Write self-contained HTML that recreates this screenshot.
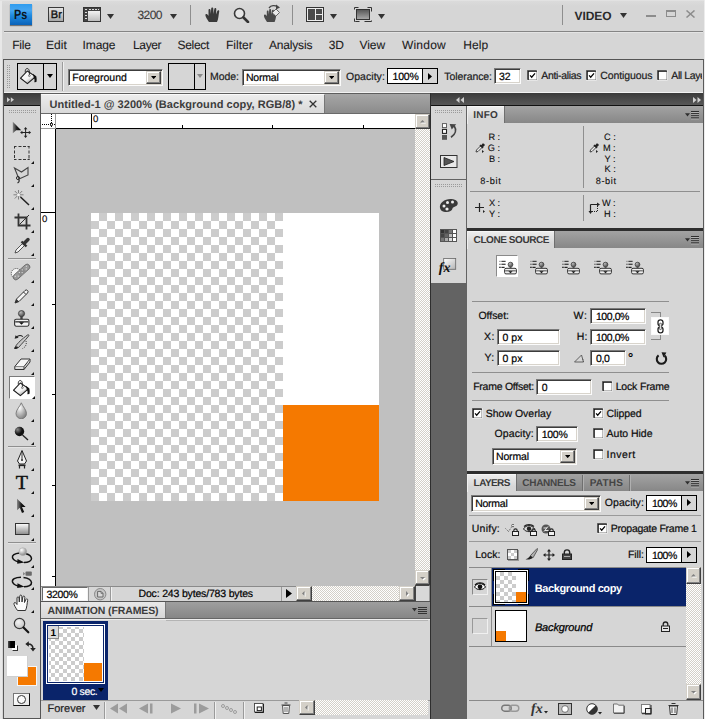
<!DOCTYPE html>
<html lang="en"><head><meta charset="utf-8"><title>Adobe Photoshop CS4</title>
<style>
html,body{margin:0;padding:0;}
body{width:705px;height:719px;overflow:hidden;background:#d6d6d6;position:relative;font-family:"Liberation Sans",sans-serif;}
#app{position:absolute;left:0;top:0;width:705px;height:719px;overflow:hidden;}
#app div,#app svg,#app span{position:absolute;box-sizing:border-box;}
.t{white-space:pre;line-height:normal;text-rendering:geometricPrecision;-webkit-text-stroke:0.2px currentColor;}

.sunk{background:#fff;border:1px solid;border-color:#7a7a7a #fbfbfb #fbfbfb #7a7a7a;box-shadow:inset 1px 1px 0 #3c3c3c,inset -1px -1px 0 #d8d4cc;}
.blk{border:1px solid #000;}
.btn{background:#d4d0c8;border:1px solid;border-color:#d4d0c8 #404040 #404040 #d4d0c8;box-shadow:inset -1px -1px 0 #808080,inset 1px 1px 0 #fff;}
.dith{background-color:#d4d0c8;background-image:linear-gradient(45deg,#fff 25%,transparent 25%,transparent 75%,#fff 75%),linear-gradient(45deg,#fff 25%,transparent 25%,transparent 75%,#fff 75%);background-size:2px 2px;background-position:0 0,1px 1px;}
.chk{background-color:#fff;background-image:linear-gradient(45deg,#ccc 25%,transparent 25%,transparent 75%,#ccc 75%),linear-gradient(45deg,#ccc 25%,transparent 25%,transparent 75%,#ccc 75%);background-size:16px 16px;background-position:0 0,8px 8px;}
.chks{background-color:#fff;background-image:linear-gradient(45deg,#ccc 25%,transparent 25%,transparent 75%,#ccc 75%),linear-gradient(45deg,#ccc 25%,transparent 25%,transparent 75%,#ccc 75%);background-size:8px 8px;background-position:0 0,4px 4px;}
.cb{background:#fff;border:1px solid;border-color:#555 #eee #eee #555;box-shadow:inset 1px 1px 0 #222;}
</style></head>
<body><div id="app">
<div style="left:0px;top:0px;width:705px;height:719px;background:#d6d6d6;"></div>
<div style="left:0px;top:0px;width:705px;height:31px;background:linear-gradient(#dcdcdc,#d6d6d6 6px);"></div>
<div style="left:4px;top:31px;width:699px;height:1px;background:#858585;"></div>
<div style="left:3px;top:59px;width:701px;height:1px;background:#555;"></div>
<div style="left:0px;top:0px;width:1.5px;height:719px;background:#e8e8e8;"></div>
<div style="left:0px;top:0px;width:705px;height:1px;background:#e2e2e2;"></div>
<div style="left:704px;top:0px;width:1px;height:719px;background:#ececec;"></div>
<div style="left:3px;top:59px;width:1px;height:660px;background:#5a5a5a;"></div>
<div style="left:703px;top:59px;width:1px;height:660px;background:#5a5a5a;"></div>
<div style="left:4px;top:32px;width:699px;height:1px;background:#e4e4e4;"></div>
<div style="left:4px;top:92px;width:699px;height:1px;background:#f2f2f2;"></div>
<div style="left:10px;top:4px;width:22px;height:21px;background:linear-gradient(#2f9cee,#46a6f2 30%,#1f8ae0 55%,#0a62b8);box-shadow:0 1px 1px rgba(0,0,0,.45);"></div>
<div style="left:48px;top:7px;width:16px;height:15px;background:linear-gradient(#e4e4e4,#a8a8a8);border:1px solid #3a3a3a;"></div>
<svg style="left:83px;top:7px;" width="18" height="15" viewBox="0 0 18 15"><rect x="0.5" y="0.5" width="17" height="14" fill="#d9d9d9" stroke="#333"/><rect x="1" y="1" width="16" height="3" fill="#444"/><rect x="1" y="1" width="4" height="13" fill="#444"/><rect x="5" y="4" width="12" height="10" fill="url(#gfilm)"/><defs><linearGradient id="gfilm" x1="0" y1="0" x2="0" y2="1"><stop offset="0" stop-color="#f2f2f2"/><stop offset="1" stop-color="#bdbdbd"/></linearGradient></defs><g fill="#ddd"><rect x="2" y="2" width="2" height="1"/><rect x="2" y="5" width="2" height="1"/><rect x="2" y="8" width="2" height="1"/><rect x="2" y="11" width="2" height="1"/><rect x="6" y="2" width="2" height="1"/><rect x="9" y="2" width="2" height="1"/><rect x="12" y="2" width="2" height="1"/><rect x="15" y="2" width="1" height="1"/></g></svg>
<svg style="left:107px;top:13.5px;" width="7" height="5" viewBox="0 0 7 5"><polygon points="0,0 7,0 3.5,5" fill="#333"/></svg>
<svg style="left:170px;top:13.5px;" width="7" height="5" viewBox="0 0 7 5"><polygon points="0,0 7,0 3.5,5" fill="#333"/></svg>
<div style="left:190px;top:5px;width:1px;height:20px;background:#8e8e8e;"></div>
<div style="left:292px;top:5px;width:1px;height:20px;background:#8e8e8e;"></div>
<div style="left:562px;top:5px;width:1px;height:20px;background:#8e8e8e;"></div>
<svg style="left:205px;top:7px;" width="17" height="15" viewBox="0 0 17 15"><path d="M4 15 C2 12 0 9 0.5 7.5 C1 6.5 2.5 7 3.5 9 L3.5 3 C3.5 1.5 5.5 1.5 5.5 3 L5.8 7 L6.2 1.5 C6.2 0 8.3 0 8.3 1.5 L8.5 7 L9.3 2 C9.5 0.6 11.4 0.8 11.3 2.3 L11 7.5 L12.3 4 C12.8 2.8 14.5 3.3 14.2 4.7 C13.5 8 13.5 12 12 15 Z" fill="#3a3a3a"/></svg>
<svg style="left:233px;top:7px;" width="17" height="16" viewBox="0 0 17 16"><circle cx="6.5" cy="6.5" r="5" fill="#e6e6e6" stroke="#3a3a3a" stroke-width="1.6"/><path d="M10.5 10.5 L15 15" stroke="#333" stroke-width="2.6" stroke-linecap="round"/></svg>
<svg style="left:263px;top:4px;" width="18" height="19" viewBox="0 0 18 19"><path d="M4 18 C2 15 0.5 12.5 1 11 C1.5 10 3 10.5 3.8 12 L3.8 7.5 C3.8 6 5.6 6 5.6 7.5 L5.8 10.5 L6.2 6 C6.2 4.7 8.1 4.7 8.1 6 L8.3 10.5 L9 6.6 C9.2 5.3 11 5.5 10.9 6.9 L10.7 11 L11.8 8.5 C12.3 7.4 13.8 7.9 13.5 9.1 C13 12 13 15 11.6 18 Z" fill="#4a4a4a"/><path d="M9.5 8.5 L13 5 L16.5 8.5 L13 12" fill="#e9e9e9" stroke="#666" stroke-width="1"/><path d="M6 4 C8 1.2 12 1 14.5 3" fill="none" stroke="#444" stroke-width="1.3"/><polygon points="13,0.5 17,3.5 13,5.5" fill="#444"/></svg>
<svg style="left:306px;top:7px;" width="18" height="15" viewBox="0 0 18 15"><rect x="0.5" y="0.5" width="17" height="14" fill="#ededed" stroke="#333"/><rect x="2" y="2" width="7" height="11" fill="#4a4a4a"/><rect x="10" y="2" width="6" height="5" fill="#4a4a4a"/><rect x="10" y="8" width="6" height="5" fill="#4a4a4a"/></svg>
<svg style="left:330px;top:13.5px;" width="7" height="5" viewBox="0 0 7 5"><polygon points="0,0 7,0 3.5,5" fill="#333"/></svg>
<svg style="left:354px;top:7px;" width="18" height="15" viewBox="0 0 18 15"><rect x="0.5" y="0.5" width="17" height="14" fill="none" stroke="#333" stroke-dasharray="4 9 8 9 8 5 4 0" /><rect x="2.5" y="2.5" width="13" height="10" fill="url(#gscr)" stroke="#333"/><defs><linearGradient id="gscr" x1="0" y1="0" x2="0" y2="1"><stop offset="0" stop-color="#555"/><stop offset="1" stop-color="#aaa"/></linearGradient></defs></svg>
<svg style="left:378px;top:13.5px;" width="7" height="5" viewBox="0 0 7 5"><polygon points="0,0 7,0 3.5,5" fill="#333"/></svg>
<svg style="left:620px;top:13px;" width="7" height="5" viewBox="0 0 7 5"><polygon points="0,0 7,0 3.5,5" fill="#333"/></svg>
<div style="left:646px;top:15px;width:10px;height:2px;background:#8c8c8c;"></div>
<div style="left:666px;top:10px;width:10px;height:7px;border:1px solid #8c8c8c;border-top-width:2px;"></div>
<svg style="left:686px;top:10px;" width="9" height="8" viewBox="0 0 9 8"><path d="M0.5 0.5 L8.5 7.5 M8.5 0.5 L0.5 7.5" stroke="#8c8c8c" stroke-width="1.5"/></svg>
<svg style="left:7px;top:65px;" width="5" height="24" viewBox="0 0 5 24"><g fill="#9a9a9a"><rect x="0" y="0" width="1" height="1"/><rect x="2" y="0" width="1" height="1"/><rect x="0" y="2" width="1" height="1"/><rect x="2" y="2" width="1" height="1"/><rect x="0" y="4" width="1" height="1"/><rect x="2" y="4" width="1" height="1"/><rect x="0" y="6" width="1" height="1"/><rect x="2" y="6" width="1" height="1"/><rect x="0" y="8" width="1" height="1"/><rect x="2" y="8" width="1" height="1"/><rect x="0" y="10" width="1" height="1"/><rect x="2" y="10" width="1" height="1"/><rect x="0" y="12" width="1" height="1"/><rect x="2" y="12" width="1" height="1"/><rect x="0" y="14" width="1" height="1"/><rect x="2" y="14" width="1" height="1"/><rect x="0" y="16" width="1" height="1"/><rect x="2" y="16" width="1" height="1"/><rect x="0" y="18" width="1" height="1"/><rect x="2" y="18" width="1" height="1"/><rect x="0" y="20" width="1" height="1"/><rect x="2" y="20" width="1" height="1"/><rect x="0" y="22" width="1" height="1"/><rect x="2" y="22" width="1" height="1"/></g></svg>
<div style="left:17px;top:63px;width:40px;height:27px;border:1px solid #000;"></div>
<div style="left:43px;top:63px;width:1px;height:27px;background:#000;"></div>
<svg style="left:47px;top:74px;" width="6" height="4" viewBox="0 0 6 4"><polygon points="0,0 6,0 3.0,4" fill="#000"/></svg>
<div style="left:62px;top:62px;width:1px;height:29px;background:#9c9c9c;"></div>
<div style="left:63px;top:62px;width:1px;height:29px;background:#f0f0f0;"></div>
<div class="sunk" style="left:68px;top:69px;width:95px;height:17px;"></div>
<div class="btn" style="left:146px;top:71px;width:15px;height:13px;"></div>
<svg style="left:151px;top:76.2px;" width="5.4" height="3.2" viewBox="0 0 5.4 3.2"><polygon points="0,0 5.4,0 2.7,3.2" fill="#000"/></svg>
<div style="left:168px;top:63px;width:38px;height:27px;border:1px solid #000;"></div>
<div style="left:194px;top:63px;width:1px;height:27px;background:#000;"></div>
<svg style="left:197px;top:74px;" width="6" height="4" viewBox="0 0 6 4"><polygon points="0,0 6,0 3.0,4" fill="#8a8a8a"/></svg>
<div class="sunk" style="left:242px;top:69px;width:99px;height:17px;"></div>
<div class="btn" style="left:324px;top:71px;width:15px;height:13px;"></div>
<svg style="left:329px;top:76.2px;" width="5.4" height="3.2" viewBox="0 0 5.4 3.2"><polygon points="0,0 5.4,0 2.7,3.2" fill="#000"/></svg>
<div style="left:387px;top:68px;width:51px;height:16px;background:#fff;border:1px solid #000;"></div>
<div style="left:422px;top:68px;width:16px;height:16px;background:#d6d6d6;border:1px solid #000;"></div>
<svg style="left:428px;top:73px;" width="4" height="7" viewBox="0 0 4 7"><polygon points="0,0 4,3.5 0,7" fill="#000"/></svg>
<div class="sunk" style="left:494px;top:68px;width:27px;height:16px;"></div>
<svg style="left:527.2px;top:70.2px;" width="11" height="11" viewBox="0 0 11 11"><rect x="0" y="0" width="10.6" height="10.6" fill="#f0f0f0"/><rect x="0" y="0" width="9.7" height="9.7" fill="#777"/><rect x="0.7" y="0.7" width="9.2" height="9.2" fill="#151515"/><rect x="1.8" y="1.8" width="7.9" height="7.9" fill="#fff"/><path d="M3.1 5.3 L4.7 7.2 L8 3.3" fill="none" stroke="#000" stroke-width="1.25"/></svg>
<svg style="left:586px;top:70.2px;" width="11" height="11" viewBox="0 0 11 11"><rect x="0" y="0" width="10.6" height="10.6" fill="#f0f0f0"/><rect x="0" y="0" width="9.7" height="9.7" fill="#777"/><rect x="0.7" y="0.7" width="9.2" height="9.2" fill="#151515"/><rect x="1.8" y="1.8" width="7.9" height="7.9" fill="#fff"/><path d="M3.1 5.3 L4.7 7.2 L8 3.3" fill="none" stroke="#000" stroke-width="1.25"/></svg>
<svg style="left:656.8px;top:70.2px;" width="11" height="11" viewBox="0 0 11 11"><rect x="0" y="0" width="10.6" height="10.6" fill="#f0f0f0"/><rect x="0" y="0" width="9.7" height="9.7" fill="#777"/><rect x="0.7" y="0.7" width="9.2" height="9.2" fill="#151515"/><rect x="1.8" y="1.8" width="7.9" height="7.9" fill="#fff"/></svg>
<div style="left:4px;top:93px;width:37px;height:13px;background:linear-gradient(#3a3a3a,#444 30%,#565656 90%,#111 91%);"></div>
<svg style="left:7px;top:97px;" width="8" height="6" viewBox="0 0 8 6"><polygon points="0,0.3 3.2,2.8 0,5.3" fill="#d0d0d0"/><polygon points="3.8,0.3 7,2.8 3.8,5.3" fill="#d0d0d0"/></svg>
<div style="left:430px;top:93px;width:273px;height:13px;background:linear-gradient(#3a3a3a,#444 30%,#565656 90%,#111 91%);"></div>
<svg style="left:456px;top:97px;" width="8" height="6" viewBox="0 0 8 6"><polygon points="3.5,0 0,3 3.5,6" fill="#d0d0d0"/><polygon points="8,0 4.5,3 8,6" fill="#d0d0d0"/></svg>
<svg style="left:692.7px;top:96.8px;" width="8" height="6" viewBox="0 0 8 6"><polygon points="0,0 3.5,3 0,6" fill="#d0d0d0"/><polygon points="4.5,0 8,3 4.5,6" fill="#d0d0d0"/></svg>
<div style="left:4px;top:106px;width:36px;height:613px;background:#d6d6d6;"></div>
<div style="left:40px;top:94px;width:1px;height:625px;background:#555;"></div>
<svg style="left:9px;top:110px;" width="28" height="3" viewBox="0 0 28 3"><g fill="#9a9a9a"><rect x="0" y="0" width="1" height="1"/><rect x="2" y="0" width="1" height="1"/><rect x="4" y="0" width="1" height="1"/><rect x="6" y="0" width="1" height="1"/><rect x="8" y="0" width="1" height="1"/><rect x="10" y="0" width="1" height="1"/><rect x="12" y="0" width="1" height="1"/><rect x="14" y="0" width="1" height="1"/><rect x="16" y="0" width="1" height="1"/><rect x="18" y="0" width="1" height="1"/><rect x="20" y="0" width="1" height="1"/><rect x="22" y="0" width="1" height="1"/><rect x="24" y="0" width="1" height="1"/><rect x="26" y="0" width="1" height="1"/><rect x="0" y="2" width="1" height="1"/><rect x="2" y="2" width="1" height="1"/><rect x="4" y="2" width="1" height="1"/><rect x="6" y="2" width="1" height="1"/><rect x="8" y="2" width="1" height="1"/><rect x="10" y="2" width="1" height="1"/><rect x="12" y="2" width="1" height="1"/><rect x="14" y="2" width="1" height="1"/><rect x="16" y="2" width="1" height="1"/><rect x="18" y="2" width="1" height="1"/><rect x="20" y="2" width="1" height="1"/><rect x="22" y="2" width="1" height="1"/><rect x="24" y="2" width="1" height="1"/><rect x="26" y="2" width="1" height="1"/></g></svg>
<div style="left:41px;top:93px;width:389px;height:1px;background:#5e5e5e;"></div>
<div style="left:41px;top:94px;width:389px;height:20px;background:linear-gradient(#a6a6a6,#8a8a8a);"></div>
<div style="left:41px;top:94px;width:284px;height:20px;background:linear-gradient(#ececec,#d8d8d8);border-right:1px solid #777;border-top:1px solid #fafafa;"></div>
<svg style="left:309px;top:100px;" width="8" height="8" viewBox="0 0 8 8"><path d="M0.7 0.7 L7.3 7.3 M7.3 0.7 L0.7 7.3" stroke="#333" stroke-width="1.3"/></svg>
<div style="left:41px;top:113px;width:389px;height:1px;background:#6a6a6a;"></div>
<div style="left:41px;top:114px;width:374px;height:15px;background:#fff;"></div>
<div style="left:41px;top:114px;width:15px;height:473px;background:#fff;"></div>
<div style="left:41px;top:128px;width:374px;height:1px;background:#000;"></div>
<div style="left:55px;top:114px;width:1px;height:473px;background:#000;"></div>
<div style="left:91px;top:114px;width:1px;height:14px;background:#000;"></div>
<div style="left:41px;top:212px;width:14px;height:1px;background:#000;"></div>
<div style="left:182px;top:125px;width:1px;height:3px;background:#000;"></div>
<div style="left:272px;top:125px;width:1px;height:3px;background:#000;"></div>
<div style="left:363px;top:125px;width:1px;height:3px;background:#000;"></div>
<div style="left:52px;top:304px;width:3px;height:1px;background:#000;"></div>
<div style="left:52px;top:394px;width:3px;height:1px;background:#000;"></div>
<div style="left:52px;top:485px;width:3px;height:1px;background:#000;"></div>
<div style="left:52px;top:576px;width:3px;height:1px;background:#000;"></div>
<div style="left:41px;top:128px;width:15px;height:1px;background:#9a9a9a;"></div>
<div style="left:55px;top:114px;width:1px;height:14px;background:#9a9a9a;"></div>
<svg style="left:41px;top:114px;" width="14" height="14" viewBox="0 0 14 14"><path d="M1 10.5 H14 M10.5 0 V14" stroke="#000" stroke-width="1" stroke-dasharray="1 1"/><rect x="9.5" y="9.5" width="2" height="2" fill="#fff" stroke="#000" stroke-width="0.7"/></svg>
<div style="left:56px;top:129px;width:359px;height:458px;background:#c0c0c0;"></div>
<div class="chk" style="left:91px;top:213px;width:192px;height:288px;"></div>
<div style="left:283px;top:213px;width:96px;height:192px;background:#fff;"></div>
<div style="left:283px;top:405px;width:96px;height:96px;background:#f57900;"></div>
<div class="dith" style="left:415px;top:114px;width:15px;height:473px;"></div>
<div class="btn" style="left:415px;top:114px;width:15px;height:15px;"></div>
<svg style="left:420px;top:119px;" width="7" height="6" viewBox="0 0 7 6"><polygon points="1,4.5 6,4.5 3.5,2" fill="#fff"/><polygon points="0,3.5 5,3.5 2.5,1" fill="#808080"/></svg>
<div class="btn" style="left:415px;top:570px;width:15px;height:15px;"></div>
<svg style="left:420px;top:576px;" width="7" height="6" viewBox="0 0 7 6"><polygon points="1,2 6,2 3.5,4.5" fill="#fff"/><polygon points="0,1 5,1 2.5,3.5" fill="#808080"/></svg>
<div style="left:41px;top:586px;width:389px;height:16px;background:#d6d6d6;"></div>
<div style="left:41px;top:586px;width:374px;height:1px;background:#8a8a8a;"></div>
<div style="left:42px;top:587px;width:46px;height:14px;background:#fff;border:1px solid;border-color:#6a6a6a #f4f4f4 #f4f4f4 #6a6a6a;"></div>
<div style="left:88px;top:587px;width:1px;height:14px;background:#999;"></div>
<svg style="left:94px;top:588px;" width="13" height="13" viewBox="0 0 13 13"><circle cx="6.2" cy="6.2" r="5.7" fill="#c6c6c6" stroke="#8a8a8a" stroke-width="1"/><path d="M3.6 3.4 H7 L9 5.4 V9 H3.6 Z" fill="#d8d8d8" stroke="#6a6a6a" stroke-width="1"/><path d="M7 3.4 V5.4 H9" fill="none" stroke="#6a6a6a" stroke-width="0.8"/></svg>
<div style="left:110px;top:587px;width:1px;height:14px;background:#999;"></div>
<div style="left:111px;top:587px;width:1px;height:14px;background:#f2f2f2;"></div>
<div style="left:281px;top:587px;width:1px;height:14px;background:#999;"></div>
<svg style="left:286px;top:589px;" width="6" height="9" viewBox="0 0 6 9"><polygon points="0,0 6,4.5 0,9" fill="#000"/></svg>
<div class="dith" style="left:296px;top:586px;width:119px;height:15px;"></div>
<div class="btn" style="left:296px;top:586px;width:16px;height:15px;"></div>
<svg style="left:301px;top:591px;" width="6" height="7" viewBox="0 0 6 7"><polygon points="4.5,1 4.5,6 2,3.5" fill="#fff"/><polygon points="3.5,0 3.5,5 1,2.5" fill="#808080"/></svg>
<div class="btn" style="left:399px;top:586px;width:16px;height:15px;"></div>
<svg style="left:405px;top:591px;" width="6" height="7" viewBox="0 0 6 7"><polygon points="2,1 2,6 4.5,3.5" fill="#fff"/><polygon points="1,0 1,5 3.5,2.5" fill="#808080"/></svg>
<div style="left:415px;top:585px;width:15px;height:16px;background:#d8d8d8;border-right:1px solid #9a9a9a;border-top:1px solid #444;border-left:1px solid #444;"></div>
<div style="left:41px;top:601px;width:389px;height:1px;background:#555;"></div>
<div style="left:41px;top:602px;width:389px;height:17px;background:linear-gradient(#9e9e9e,#858585);"></div>
<div style="left:41px;top:602px;width:125px;height:17px;background:linear-gradient(#e8e8e8,#d6d6d6);border-right:1px solid #777;"></div>
<svg style="left:412px;top:607px;" width="15" height="7" viewBox="0 0 15 7"><polygon points="0,1 5,1 2.5,4.5" fill="#333"/><g fill="#333"><rect x="6" y="0" width="9" height="1"/><rect x="6" y="2" width="9" height="1"/><rect x="6" y="4" width="9" height="1"/><rect x="6" y="6" width="9" height="1"/></g></svg>
<div style="left:41px;top:618px;width:389px;height:1px;background:#666;"></div>
<div style="left:41px;top:619px;width:389px;height:1px;background:#eee;"></div>
<div style="left:166px;top:620px;width:262px;height:1px;background:#b4b4b4;"></div>
<div style="left:43px;top:621px;width:65px;height:79px;background:#0a246a;"></div>
<div style="left:46px;top:624px;width:59px;height:60px;background:#fff;"></div>
<div style="left:47px;top:625px;width:57px;height:58px;background:#0a246a;"></div>
<div style="left:48px;top:626px;width:55px;height:56px;background:#fff;"></div>
<div style="left:48.5px;top:626.5px;width:35.5px;height:54.5px;overflow:hidden;"><div class="chks" style="left:-1.5px;top:-1.75px;width:48px;height:64px;"></div></div>
<div style="left:84px;top:626.5px;width:18.5px;height:37px;background:#fff;"></div>
<div style="left:84px;top:663px;width:18px;height:18px;background:#f57900;"></div>
<div style="left:48px;top:626px;width:11px;height:13px;background:#dcdcdc;border-right:1px solid #8a8a8a;border-bottom:1px solid #8a8a8a;"></div>
<svg style="left:98px;top:688px;" width="6" height="4" viewBox="0 0 6 4"><polygon points="0,0 6,0 3.0,4" fill="#000"/></svg>
<div style="left:41px;top:700px;width:389px;height:1px;background:#9a9a9a;"></div>
<svg style="left:93px;top:705px;" width="7" height="5" viewBox="0 0 7 5"><polygon points="0,0 7,0 3.5,5" fill="#333"/></svg>
<div style="left:104px;top:702px;width:1px;height:17px;background:#9a9a9a;"></div>
<div style="left:105px;top:702px;width:1px;height:17px;background:#f0f0f0;"></div>
<svg style="left:110px;top:703px;" width="18" height="11" viewBox="0 0 18 11"><polygon points="8,0.5 8,10.5 0,5.5" fill="#9c9c9c"/><polygon points="17,0.5 17,10.5 9,5.5" fill="#9c9c9c"/></svg>
<svg style="left:139px;top:703px;" width="16" height="11" viewBox="0 0 16 11"><polygon points="9,0.5 9,10.5 0,5.5" fill="#9c9c9c"/><rect x="11" y="0.5" width="2.5" height="10" fill="#9c9c9c"/></svg>
<svg style="left:171px;top:703px;" width="11" height="11" viewBox="0 0 11 11"><polygon points="0,0.5 0,10.5 10,5.5" fill="#9c9c9c"/></svg>
<svg style="left:194px;top:703px;" width="16" height="11" viewBox="0 0 16 11"><rect x="0" y="0.5" width="2.5" height="10" fill="#9c9c9c"/><polygon points="5,0.5 5,10.5 15,5.5" fill="#9c9c9c"/></svg>
<div style="left:214px;top:702px;width:1px;height:17px;background:#9a9a9a;"></div>
<div style="left:215px;top:702px;width:1px;height:17px;background:#f0f0f0;"></div>
<svg style="left:220px;top:703px;" width="18" height="11" viewBox="0 0 18 11"><g fill="none" stroke="#9c9c9c"><circle cx="3" cy="3" r="1.5"/><circle cx="7" cy="5" r="1.5"/><circle cx="11" cy="7" r="1.5"/><circle cx="15" cy="9" r="1.5"/></g></svg>
<div style="left:243px;top:702px;width:1px;height:17px;background:#9a9a9a;"></div>
<div style="left:244px;top:702px;width:1px;height:17px;background:#f0f0f0;"></div>
<svg style="left:254px;top:703px;" width="10" height="10" viewBox="0 0 10 10"><rect x="0.5" y="0.5" width="8.5" height="8.5" fill="#fff" stroke="#444" stroke-width="0.9"/><rect x="3.2" y="4" width="4.2" height="3.6" fill="#fff" stroke="#222" stroke-width="1"/><path d="M1 9.6 H9.6 V1" stroke="#111" stroke-width="1" fill="none"/></svg>
<svg style="left:281px;top:702px;" width="10" height="12" viewBox="0 0 10 12"><path d="M1.5 3.5 H8.5 L7.8 11.5 H2.2 Z" fill="#f0f0f0" stroke="#555"/><path d="M0.5 3 H9.5 M3.5 1 H6.5" stroke="#444" fill="none" stroke-width="1.2"/><path d="M4 5 V10 M6 5 V10" stroke="#777"/></svg>
<div class="dith" style="left:299px;top:700px;width:129px;height:15px;"></div>
<div class="btn" style="left:299px;top:700px;width:16px;height:15px;"></div>
<svg style="left:304px;top:705px;" width="6" height="7" viewBox="0 0 6 7"><polygon points="4.5,1 4.5,6 2,3.5" fill="#fff"/><polygon points="3.5,0 3.5,5 1,2.5" fill="#808080"/></svg>
<div style="left:3px;top:718px;width:38px;height:1px;background:#555;"></div>
<div style="left:430px;top:106px;width:273px;height:613px;background:#636363;"></div>
<div style="left:430px;top:93px;width:1px;height:626px;background:#2e2e2e;"></div>
<div style="left:431px;top:106px;width:35px;height:73px;background:#d6d6d6;"></div>
<div style="left:431px;top:180px;width:35px;height:103px;background:#d6d6d6;"></div>
<svg style="left:435px;top:110px;" width="28" height="3" viewBox="0 0 28 3"><g fill="#9a9a9a"><rect x="0" y="0" width="1" height="1"/><rect x="2" y="0" width="1" height="1"/><rect x="4" y="0" width="1" height="1"/><rect x="6" y="0" width="1" height="1"/><rect x="8" y="0" width="1" height="1"/><rect x="10" y="0" width="1" height="1"/><rect x="12" y="0" width="1" height="1"/><rect x="14" y="0" width="1" height="1"/><rect x="16" y="0" width="1" height="1"/><rect x="18" y="0" width="1" height="1"/><rect x="20" y="0" width="1" height="1"/><rect x="22" y="0" width="1" height="1"/><rect x="24" y="0" width="1" height="1"/><rect x="26" y="0" width="1" height="1"/><rect x="0" y="2" width="1" height="1"/><rect x="2" y="2" width="1" height="1"/><rect x="4" y="2" width="1" height="1"/><rect x="6" y="2" width="1" height="1"/><rect x="8" y="2" width="1" height="1"/><rect x="10" y="2" width="1" height="1"/><rect x="12" y="2" width="1" height="1"/><rect x="14" y="2" width="1" height="1"/><rect x="16" y="2" width="1" height="1"/><rect x="18" y="2" width="1" height="1"/><rect x="20" y="2" width="1" height="1"/><rect x="22" y="2" width="1" height="1"/><rect x="24" y="2" width="1" height="1"/><rect x="26" y="2" width="1" height="1"/></g></svg>
<svg style="left:435px;top:184px;" width="28" height="3" viewBox="0 0 28 3"><g fill="#9a9a9a"><rect x="0" y="0" width="1" height="1"/><rect x="2" y="0" width="1" height="1"/><rect x="4" y="0" width="1" height="1"/><rect x="6" y="0" width="1" height="1"/><rect x="8" y="0" width="1" height="1"/><rect x="10" y="0" width="1" height="1"/><rect x="12" y="0" width="1" height="1"/><rect x="14" y="0" width="1" height="1"/><rect x="16" y="0" width="1" height="1"/><rect x="18" y="0" width="1" height="1"/><rect x="20" y="0" width="1" height="1"/><rect x="22" y="0" width="1" height="1"/><rect x="24" y="0" width="1" height="1"/><rect x="26" y="0" width="1" height="1"/><rect x="0" y="2" width="1" height="1"/><rect x="2" y="2" width="1" height="1"/><rect x="4" y="2" width="1" height="1"/><rect x="6" y="2" width="1" height="1"/><rect x="8" y="2" width="1" height="1"/><rect x="10" y="2" width="1" height="1"/><rect x="12" y="2" width="1" height="1"/><rect x="14" y="2" width="1" height="1"/><rect x="16" y="2" width="1" height="1"/><rect x="18" y="2" width="1" height="1"/><rect x="20" y="2" width="1" height="1"/><rect x="22" y="2" width="1" height="1"/><rect x="24" y="2" width="1" height="1"/><rect x="26" y="2" width="1" height="1"/></g></svg>
<div style="left:467px;top:228px;width:236px;height:3px;background:#2e2e2e;"></div>
<div style="left:467px;top:471px;width:236px;height:3px;background:#2e2e2e;"></div>
<div style="left:467px;top:106px;width:236px;height:17px;background:linear-gradient(#a3a3a3,#878787);"></div>
<div style="left:467px;top:123px;width:236px;height:105px;background:#d6d6d6;"></div>
<div style="left:467px;top:106px;width:37px;height:18px;background:linear-gradient(#ececec,#d6d6d6 70%);border-top:1px solid #f6f6f6;border-left:1px solid #f0f0f0;"></div>
<div style="left:504px;top:106px;width:1px;height:17px;background:#6f6f6f;"></div>
<svg style="left:685px;top:110.8px;" width="15" height="9" viewBox="0 0 15 9"><polygon points="0,2.2 5,2.2 2.5,5.4" fill="#2e2e2e"/><g fill="#c4c4c4"><rect x="6" y="1" width="8" height="1"/><rect x="6" y="3.1" width="8" height="1"/><rect x="6" y="5.2" width="8" height="1"/><rect x="6" y="7.3" width="8" height="1"/></g><g fill="#2e2e2e"><rect x="6" y="0" width="8" height="1.1"/><rect x="6" y="2.1" width="8" height="1.1"/><rect x="6" y="4.2" width="8" height="1.1"/><rect x="6" y="6.3" width="8" height="1.1"/></g></svg>
<div style="left:583px;top:126px;width:1px;height:62px;background:#8f8f8f;"></div>
<div style="left:470px;top:191px;width:230px;height:1px;background:#8f8f8f;"></div>
<div style="left:583px;top:195px;width:1px;height:26px;background:#8f8f8f;"></div>
<svg style="left:475px;top:143px;" width="10" height="10" viewBox="0 0 10 10"><path d="M1 9 L1.5 7 L5.5 3 L7 4.5 L3 8.5 Z" fill="#eee" stroke="#333" stroke-width="0.9"/><path d="M5 2 L8 5 M6.3 3.2 L8.2 1.2 A0.9 0.9 0 0 1 9 2 L7 4" stroke="#222" stroke-width="1.6" fill="none"/><polygon points="7,7 7,10 9,8.5" fill="#222"/></svg>
<svg style="left:589px;top:143px;" width="10" height="10" viewBox="0 0 10 10"><path d="M1 9 L1.5 7 L5.5 3 L7 4.5 L3 8.5 Z" fill="#eee" stroke="#333" stroke-width="0.9"/><path d="M5 2 L8 5 M6.3 3.2 L8.2 1.2 A0.9 0.9 0 0 1 9 2 L7 4" stroke="#222" stroke-width="1.6" fill="none"/><polygon points="7,7 7,10 9,8.5" fill="#222"/></svg>
<svg style="left:475px;top:203px;" width="11" height="10" viewBox="0 0 11 10"><path d="M4.5 0 V9 M0 4.5 H9" stroke="#222" stroke-width="1.2"/><polygon points="8,7 8,10 10,8.5" fill="#222"/></svg>
<svg style="left:588px;top:202px;" width="12" height="12" viewBox="0 0 12 12"><path d="M2.5 2.5 H9.5 M2.5 2.5 V9.5" stroke="#222" stroke-width="1.2" fill="none"/><path d="M9.5 4 V9.5 H4" stroke="#222" stroke-width="1" stroke-dasharray="1 1" fill="none"/><polygon points="9,0.5 12,2.5 9,4.5" fill="#222"/><polygon points="0.5,9 2.5,12 4.5,9" fill="#222"/></svg>
<div style="left:467px;top:231px;width:236px;height:17px;background:linear-gradient(#a3a3a3,#878787);"></div>
<div style="left:467px;top:248px;width:236px;height:223px;background:#d6d6d6;"></div>
<div style="left:467px;top:231px;width:87px;height:18px;background:linear-gradient(#ececec,#d6d6d6 70%);border-top:1px solid #f6f6f6;border-left:1px solid #f0f0f0;"></div>
<div style="left:554px;top:231px;width:1px;height:17px;background:#6f6f6f;"></div>
<svg style="left:685px;top:235.8px;" width="15" height="9" viewBox="0 0 15 9"><polygon points="0,2.2 5,2.2 2.5,5.4" fill="#2e2e2e"/><g fill="#c4c4c4"><rect x="6" y="1" width="8" height="1"/><rect x="6" y="3.1" width="8" height="1"/><rect x="6" y="5.2" width="8" height="1"/><rect x="6" y="7.3" width="8" height="1"/></g><g fill="#2e2e2e"><rect x="6" y="0" width="8" height="1.1"/><rect x="6" y="2.1" width="8" height="1.1"/><rect x="6" y="4.2" width="8" height="1.1"/><rect x="6" y="6.3" width="8" height="1.1"/></g></svg>
<div style="left:496px;top:255px;width:22px;height:22px;background:#fff;border:1px solid;border-color:#8a8a8a #fff #fff #8a8a8a;"></div>
<svg style="left:499px;top:259.5px;" width="18" height="15" viewBox="0 0 18 15"><g><rect x="0.3" y="0.8" width="1.3" height="1.2" fill="#8a8a8a"/><rect x="2.4" y="0.8" width="4.2" height="1.1" fill="#333"/><rect x="0.3" y="3.7" width="1.3" height="1.2" fill="#555"/><rect x="2.4" y="3.7" width="4.2" height="1.1" fill="#222"/><rect x="0.3" y="6.7" width="1.3" height="1.3" fill="#000"/><rect x="2.4" y="6.8" width="3.2" height="1.1" fill="#111"/></g><circle cx="11.5" cy="4.6" r="2.4" fill="url(#gst)" stroke="#333" stroke-width="0.7"/><rect x="10.6" y="6.6" width="1.9" height="2" fill="#555"/><rect x="5.6" y="8.3" width="11.8" height="5.6" rx="1.4" fill="#f0f0f0" stroke="#333" stroke-width="1"/><rect x="6.2" y="10.2" width="10.6" height="1.2" fill="#666"/><polygon points="9.4,11.2 13.6,11.2 11.5,13.2" fill="#111"/></svg>
<svg style="left:530px;top:259.5px;" width="18" height="15" viewBox="0 0 18 15"><g><rect x="0.3" y="0.8" width="1.3" height="1.2" fill="#8a8a8a"/><rect x="2.4" y="0.8" width="4.2" height="1.1" fill="#333"/><rect x="0.3" y="3.7" width="1.3" height="1.2" fill="#555"/><rect x="2.4" y="3.7" width="4.2" height="1.1" fill="#222"/><rect x="0.3" y="6.7" width="1.3" height="1.3" fill="#000"/><rect x="2.4" y="6.8" width="3.2" height="1.1" fill="#111"/></g><circle cx="11.5" cy="4.6" r="2.4" fill="url(#gst)" stroke="#333" stroke-width="0.7"/><rect x="10.6" y="6.6" width="1.9" height="2" fill="#555"/><rect x="5.6" y="8.3" width="11.8" height="5.6" rx="1.4" fill="#f0f0f0" stroke="#333" stroke-width="1"/><rect x="6.2" y="10.2" width="10.6" height="1.2" fill="#666"/><polygon points="9.4,11.2 13.6,11.2 11.5,13.2" fill="#111"/></svg>
<svg style="left:562px;top:259.5px;" width="18" height="15" viewBox="0 0 18 15"><g><rect x="0.3" y="0.8" width="1.3" height="1.2" fill="#8a8a8a"/><rect x="2.4" y="0.8" width="4.2" height="1.1" fill="#333"/><rect x="0.3" y="3.7" width="1.3" height="1.2" fill="#555"/><rect x="2.4" y="3.7" width="4.2" height="1.1" fill="#222"/><rect x="0.3" y="6.7" width="1.3" height="1.3" fill="#000"/><rect x="2.4" y="6.8" width="3.2" height="1.1" fill="#111"/></g><circle cx="11.5" cy="4.6" r="2.4" fill="url(#gst)" stroke="#333" stroke-width="0.7"/><rect x="10.6" y="6.6" width="1.9" height="2" fill="#555"/><rect x="5.6" y="8.3" width="11.8" height="5.6" rx="1.4" fill="#f0f0f0" stroke="#333" stroke-width="1"/><rect x="6.2" y="10.2" width="10.6" height="1.2" fill="#666"/><polygon points="9.4,11.2 13.6,11.2 11.5,13.2" fill="#111"/></svg>
<svg style="left:594px;top:259.5px;" width="18" height="15" viewBox="0 0 18 15"><g><rect x="0.3" y="0.8" width="1.3" height="1.2" fill="#8a8a8a"/><rect x="2.4" y="0.8" width="4.2" height="1.1" fill="#333"/><rect x="0.3" y="3.7" width="1.3" height="1.2" fill="#555"/><rect x="2.4" y="3.7" width="4.2" height="1.1" fill="#222"/><rect x="0.3" y="6.7" width="1.3" height="1.3" fill="#000"/><rect x="2.4" y="6.8" width="3.2" height="1.1" fill="#111"/></g><circle cx="11.5" cy="4.6" r="2.4" fill="url(#gst)" stroke="#333" stroke-width="0.7"/><rect x="10.6" y="6.6" width="1.9" height="2" fill="#555"/><rect x="5.6" y="8.3" width="11.8" height="5.6" rx="1.4" fill="#f0f0f0" stroke="#333" stroke-width="1"/><rect x="6.2" y="10.2" width="10.6" height="1.2" fill="#666"/><polygon points="9.4,11.2 13.6,11.2 11.5,13.2" fill="#111"/></svg>
<svg style="left:626px;top:259.5px;" width="18" height="15" viewBox="0 0 18 15"><g><rect x="0.3" y="0.8" width="1.3" height="1.2" fill="#8a8a8a"/><rect x="2.4" y="0.8" width="4.2" height="1.1" fill="#333"/><rect x="0.3" y="3.7" width="1.3" height="1.2" fill="#555"/><rect x="2.4" y="3.7" width="4.2" height="1.1" fill="#222"/><rect x="0.3" y="6.7" width="1.3" height="1.3" fill="#000"/><rect x="2.4" y="6.8" width="3.2" height="1.1" fill="#111"/></g><circle cx="11.5" cy="4.6" r="2.4" fill="url(#gst)" stroke="#333" stroke-width="0.7"/><rect x="10.6" y="6.6" width="1.9" height="2" fill="#555"/><rect x="5.6" y="8.3" width="11.8" height="5.6" rx="1.4" fill="#f0f0f0" stroke="#333" stroke-width="1"/><rect x="6.2" y="10.2" width="10.6" height="1.2" fill="#666"/><polygon points="9.4,11.2 13.6,11.2 11.5,13.2" fill="#111"/></svg>
<div style="left:472px;top:301px;width:197px;height:1px;background:#8f8f8f;"></div>
<div class="sunk" style="left:497px;top:329px;width:63px;height:16px;"></div>
<div class="sunk" style="left:497px;top:350px;width:63px;height:16px;"></div>
<div class="sunk" style="left:590px;top:308px;width:56px;height:16px;"></div>
<div class="sunk" style="left:590px;top:329px;width:56px;height:16px;"></div>
<div class="sunk" style="left:590px;top:350px;width:36px;height:16px;"></div>
<svg style="left:574px;top:354px;" width="10" height="9" viewBox="0 0 10 9"><path d="M0.5 8 H9.5 L7.5 1 Z" fill="none" stroke="#555" stroke-width="0.9"/><path d="M9.5 8 L8.7 5" stroke="#555" stroke-width="0.9" stroke-dasharray="1 1"/></svg>
<svg style="left:654.5px;top:352px;" width="13" height="13" viewBox="0 0 13 13"><path d="M3.6 3.4 A4.7 4.7 0 1 0 9.6 3.6" fill="none" stroke="#1a1a1a" stroke-width="2.1"/><polygon points="6.5,0.2 11.4,0.6 8.6,5.6" fill="#1a1a1a"/></svg>
<div style="left:651px;top:312px;width:10px;height:6px;border-top:1px solid #888;border-right:1px solid #888;"></div>
<div style="left:651px;top:334px;width:10px;height:6px;border-bottom:1px solid #888;border-right:1px solid #888;"></div>
<div style="left:651px;top:317px;width:18px;height:18px;background:#fff;border:1px solid #fafafa;"></div>
<svg style="left:655.5px;top:319px;" width="9" height="15" viewBox="0 0 9 15"><rect x="2" y="0.8" width="5" height="6" rx="2.4" fill="none" stroke="#222" stroke-width="1.3"/><rect x="2" y="7.8" width="5" height="6" rx="2.4" fill="none" stroke="#222" stroke-width="1.3"/><rect x="3.4" y="4.2" width="2.2" height="6.4" rx="1.1" fill="#ddd" stroke="#555" stroke-width="0.9"/></svg>
<div style="left:472px;top:372px;width:197px;height:1px;background:#8f8f8f;"></div>
<div class="sunk" style="left:536px;top:379px;width:56px;height:15.5px;"></div>
<svg style="left:602px;top:381px;" width="11" height="11" viewBox="0 0 11 11"><rect x="0" y="0" width="10.6" height="10.6" fill="#f0f0f0"/><rect x="0" y="0" width="9.7" height="9.7" fill="#777"/><rect x="0.7" y="0.7" width="9.2" height="9.2" fill="#151515"/><rect x="1.8" y="1.8" width="7.9" height="7.9" fill="#fff"/></svg>
<div style="left:472px;top:400px;width:197px;height:1px;background:#8f8f8f;"></div>
<svg style="left:472px;top:407.8px;" width="11" height="11" viewBox="0 0 11 11"><rect x="0" y="0" width="10.6" height="10.6" fill="#f0f0f0"/><rect x="0" y="0" width="9.7" height="9.7" fill="#777"/><rect x="0.7" y="0.7" width="9.2" height="9.2" fill="#151515"/><rect x="1.8" y="1.8" width="7.9" height="7.9" fill="#fff"/><path d="M3.1 5.3 L4.7 7.2 L8 3.3" fill="none" stroke="#000" stroke-width="1.25"/></svg>
<svg style="left:593px;top:407.8px;" width="11" height="11" viewBox="0 0 11 11"><rect x="0" y="0" width="10.6" height="10.6" fill="#f0f0f0"/><rect x="0" y="0" width="9.7" height="9.7" fill="#777"/><rect x="0.7" y="0.7" width="9.2" height="9.2" fill="#151515"/><rect x="1.8" y="1.8" width="7.9" height="7.9" fill="#fff"/><path d="M3.1 5.3 L4.7 7.2 L8 3.3" fill="none" stroke="#000" stroke-width="1.25"/></svg>
<div class="sunk" style="left:536px;top:426px;width:42px;height:15.5px;"></div>
<svg style="left:593px;top:428.2px;" width="11" height="11" viewBox="0 0 11 11"><rect x="0" y="0" width="10.6" height="10.6" fill="#f0f0f0"/><rect x="0" y="0" width="9.7" height="9.7" fill="#777"/><rect x="0.7" y="0.7" width="9.2" height="9.2" fill="#151515"/><rect x="1.8" y="1.8" width="7.9" height="7.9" fill="#fff"/></svg>
<div class="sunk" style="left:492px;top:447.5px;width:85px;height:17px;"></div>
<div class="btn" style="left:560px;top:449.5px;width:15px;height:13px;"></div>
<svg style="left:565px;top:454.8px;" width="5.4" height="3.2" viewBox="0 0 5.4 3.2"><polygon points="0,0 5.4,0 2.7,3.2" fill="#000"/></svg>
<svg style="left:593px;top:449px;" width="11" height="11" viewBox="0 0 11 11"><rect x="0" y="0" width="10.6" height="10.6" fill="#f0f0f0"/><rect x="0" y="0" width="9.7" height="9.7" fill="#777"/><rect x="0.7" y="0.7" width="9.2" height="9.2" fill="#151515"/><rect x="1.8" y="1.8" width="7.9" height="7.9" fill="#fff"/></svg>
<div style="left:467px;top:474px;width:236px;height:17px;background:linear-gradient(#a3a3a3,#878787);"></div>
<div style="left:467px;top:491px;width:236px;height:228px;background:#d6d6d6;"></div>
<div style="left:467px;top:474px;width:49px;height:18px;background:linear-gradient(#ececec,#d6d6d6 70%);border-top:1px solid #f6f6f6;border-left:1px solid #f0f0f0;"></div>
<div style="left:516px;top:474px;width:1px;height:17px;background:#6f6f6f;"></div>
<div style="left:582px;top:475px;width:1px;height:16px;background:#6f6f6f;"></div>
<div style="left:583px;top:475px;width:1px;height:16px;background:#b0b0b0;"></div>
<div style="left:629px;top:475px;width:1px;height:16px;background:#6f6f6f;"></div>
<div style="left:630px;top:475px;width:1px;height:16px;background:#b0b0b0;"></div>
<svg style="left:685px;top:478.8px;" width="15" height="9" viewBox="0 0 15 9"><polygon points="0,2.2 5,2.2 2.5,5.4" fill="#2e2e2e"/><g fill="#c4c4c4"><rect x="6" y="1" width="8" height="1"/><rect x="6" y="3.1" width="8" height="1"/><rect x="6" y="5.2" width="8" height="1"/><rect x="6" y="7.3" width="8" height="1"/></g><g fill="#2e2e2e"><rect x="6" y="0" width="8" height="1.1"/><rect x="6" y="2.1" width="8" height="1.1"/><rect x="6" y="4.2" width="8" height="1.1"/><rect x="6" y="6.3" width="8" height="1.1"/></g></svg>
<div class="sunk" style="left:471px;top:494.5px;width:130px;height:17.5px;"></div>
<div class="btn" style="left:584px;top:496.5px;width:15px;height:13.5px;"></div>
<svg style="left:589px;top:501.8px;" width="5.4" height="3.2" viewBox="0 0 5.4 3.2"><polygon points="0,0 5.4,0 2.7,3.2" fill="#000"/></svg>
<div style="left:646px;top:494.5px;width:51px;height:16.5px;background:#fff;border:1px solid #000;"></div>
<div style="left:681px;top:494.5px;width:16px;height:16.5px;background:#d6d6d6;border:1px solid #000;"></div>
<svg style="left:687px;top:499.25px;" width="4" height="7" viewBox="0 0 4 7"><polygon points="0,0 4,3.5 0,7" fill="#000"/></svg>
<div style="left:469px;top:515px;width:232px;height:1px;background:#9a9a9a;"></div>
<svg style="left:597.2px;top:523px;" width="11" height="11" viewBox="0 0 11 11"><rect x="0" y="0" width="10.6" height="10.6" fill="#f0f0f0"/><rect x="0" y="0" width="9.7" height="9.7" fill="#777"/><rect x="0.7" y="0.7" width="9.2" height="9.2" fill="#151515"/><rect x="1.8" y="1.8" width="7.9" height="7.9" fill="#fff"/><path d="M3.1 5.3 L4.7 7.2 L8 3.3" fill="none" stroke="#000" stroke-width="1.25"/></svg>
<div style="left:469px;top:541px;width:232px;height:1px;background:#9a9a9a;"></div>
<div style="left:646px;top:546.5px;width:51px;height:16.5px;background:#fff;border:1px solid #000;"></div>
<div style="left:681px;top:546.5px;width:16px;height:16.5px;background:#d6d6d6;border:1px solid #000;"></div>
<svg style="left:687px;top:551.25px;" width="4" height="7" viewBox="0 0 4 7"><polygon points="0,0 4,3.5 0,7" fill="#000"/></svg>
<div style="left:469px;top:567px;width:217px;height:1px;background:#8a8a8a;"></div>
<div style="left:492px;top:568px;width:194px;height:38px;background:#0a246a;"></div>
<div style="left:469px;top:606px;width:217px;height:1px;background:#8a8a8a;"></div>
<div style="left:469px;top:646px;width:217px;height:1px;background:#8a8a8a;"></div>
<div style="left:491px;top:567px;width:1px;height:80px;background:#8a8a8a;"></div>
<div style="left:472px;top:578.5px;width:16px;height:16px;border:1px solid;border-color:#888 #f0f0f0 #f0f0f0 #888;"></div>
<div style="left:472px;top:617.5px;width:16px;height:16px;border:1px solid;border-color:#999 #f0f0f0 #f0f0f0 #999;"></div>
<svg style="left:474px;top:582px;" width="12" height="9" viewBox="0 0 12 9"><path d="M0.5 5 C3 0.5 9 0.5 11.5 5 C9 8.5 3 8.5 0.5 5 Z" fill="#fff" stroke="#111" stroke-width="1"/><circle cx="6" cy="4.8" r="2.4" fill="#111"/><path d="M1 3 C3.5 0 8.5 0 11 3" stroke="#111" stroke-width="1.2" fill="none"/></svg>
<div style="left:493px;top:569px;width:36px;height:36px;background:#000;"></div>
<div style="left:505px;top:569px;width:13px;height:36px;background:#0a246a;"></div>
<div style="left:493px;top:581px;width:36px;height:13px;background:#0a246a;"></div>
<div style="left:494px;top:570px;width:34px;height:34px;background:#fff;"></div>
<div style="left:495px;top:571px;width:32px;height:32px;background:#000;"></div>
<div style="left:496px;top:572px;width:30px;height:30.3px;background:#fff;"></div>
<div class="chks" style="left:496px;top:572px;width:20px;height:30.3px;"></div>
<div style="left:516px;top:592px;width:10px;height:10.3px;background:#f57900;"></div>
<div style="left:495px;top:610px;width:32px;height:32px;background:#fff;border:1px solid #000;"></div>
<div style="left:496px;top:631px;width:10px;height:10px;background:#f57900;"></div>
<svg style="left:661px;top:620.5px;" width="9" height="11" viewBox="0 0 9 11"><path d="M2.2 5 V3.3 A2.3 2.3 0 0 1 6.8 3.3 V5" fill="none" stroke="#222" stroke-width="1.3"/><rect x="0.5" y="5" width="8" height="5.5" fill="#e6e6e6" stroke="#222" stroke-width="1"/><rect x="2" y="7" width="5" height="1" fill="#222"/></svg>
<div class="dith" style="left:686px;top:567px;width:15px;height:133px;"></div>
<div class="btn" style="left:686px;top:567px;width:15px;height:16.5px;"></div>
<svg style="left:691px;top:572.5px;" width="7" height="6" viewBox="0 0 7 6"><polygon points="1,4.5 6,4.5 3.5,2" fill="#fff"/><polygon points="0,3.5 5,3.5 2.5,1" fill="#808080"/></svg>
<div class="btn" style="left:686px;top:684px;width:15px;height:16px;"></div>
<svg style="left:691px;top:689.5px;" width="7" height="6" viewBox="0 0 7 6"><polygon points="1,2 6,2 3.5,4.5" fill="#fff"/><polygon points="0,1 5,1 2.5,3.5" fill="#808080"/></svg>
<div style="left:469px;top:700px;width:234px;height:1px;background:#8a8a8a;"></div>
<svg style="left:31px;top:161px;" width="3" height="3" viewBox="0 0 3 3"><polygon points="3,0 3,3 0,3" fill="#111"/></svg>
<svg style="left:31px;top:184px;" width="3" height="3" viewBox="0 0 3 3"><polygon points="3,0 3,3 0,3" fill="#111"/></svg>
<svg style="left:31px;top:207px;" width="3" height="3" viewBox="0 0 3 3"><polygon points="3,0 3,3 0,3" fill="#111"/></svg>
<svg style="left:31px;top:230px;" width="3" height="3" viewBox="0 0 3 3"><polygon points="3,0 3,3 0,3" fill="#111"/></svg>
<svg style="left:31px;top:253px;" width="3" height="3" viewBox="0 0 3 3"><polygon points="3,0 3,3 0,3" fill="#111"/></svg>
<svg style="left:31px;top:280px;" width="3" height="3" viewBox="0 0 3 3"><polygon points="3,0 3,3 0,3" fill="#111"/></svg>
<svg style="left:31px;top:303px;" width="3" height="3" viewBox="0 0 3 3"><polygon points="3,0 3,3 0,3" fill="#111"/></svg>
<svg style="left:31px;top:326px;" width="3" height="3" viewBox="0 0 3 3"><polygon points="3,0 3,3 0,3" fill="#111"/></svg>
<svg style="left:31px;top:349px;" width="3" height="3" viewBox="0 0 3 3"><polygon points="3,0 3,3 0,3" fill="#111"/></svg>
<svg style="left:31px;top:372px;" width="3" height="3" viewBox="0 0 3 3"><polygon points="3,0 3,3 0,3" fill="#111"/></svg>
<svg style="left:31px;top:418.5px;" width="3" height="3" viewBox="0 0 3 3"><polygon points="3,0 3,3 0,3" fill="#111"/></svg>
<svg style="left:31px;top:441.5px;" width="3" height="3" viewBox="0 0 3 3"><polygon points="3,0 3,3 0,3" fill="#111"/></svg>
<svg style="left:31px;top:468px;" width="3" height="3" viewBox="0 0 3 3"><polygon points="3,0 3,3 0,3" fill="#111"/></svg>
<svg style="left:31px;top:491px;" width="3" height="3" viewBox="0 0 3 3"><polygon points="3,0 3,3 0,3" fill="#111"/></svg>
<svg style="left:31px;top:514px;" width="3" height="3" viewBox="0 0 3 3"><polygon points="3,0 3,3 0,3" fill="#111"/></svg>
<svg style="left:31px;top:537.5px;" width="3" height="3" viewBox="0 0 3 3"><polygon points="3,0 3,3 0,3" fill="#111"/></svg>
<svg style="left:31px;top:564.5px;" width="3" height="3" viewBox="0 0 3 3"><polygon points="3,0 3,3 0,3" fill="#111"/></svg>
<svg style="left:31px;top:587px;" width="3" height="3" viewBox="0 0 3 3"><polygon points="3,0 3,3 0,3" fill="#111"/></svg>
<svg style="left:31px;top:610px;" width="3" height="3" viewBox="0 0 3 3"><polygon points="3,0 3,3 0,3" fill="#111"/></svg>
<div style="left:8px;top:258px;width:28px;height:1px;background:#8f8f8f;"></div>
<div style="left:8px;top:259px;width:28px;height:1px;background:#e4e4e4;"></div>
<div style="left:8px;top:446px;width:28px;height:1px;background:#8f8f8f;"></div>
<div style="left:8px;top:447px;width:28px;height:1px;background:#e4e4e4;"></div>
<div style="left:8px;top:542px;width:28px;height:1px;background:#8f8f8f;"></div>
<div style="left:8px;top:543px;width:28px;height:1px;background:#e4e4e4;"></div>
<svg style="left:0px;top:0px;opacity:0;" width="1" height="1" viewBox="0 0 1 1"><defs><linearGradient id="gv" x1="0" y1="0" x2="0" y2="1"><stop offset="0" stop-color="#fff"/><stop offset="1" stop-color="#8a8a8a"/></linearGradient><linearGradient id="gh" x1="0" y1="0" x2="1" y2="0"><stop offset="0" stop-color="#999"/><stop offset="1" stop-color="#111"/></linearGradient><radialGradient id="gb" cx="0.35" cy="0.3" r="0.8"><stop offset="0" stop-color="#fff"/><stop offset="1" stop-color="#777"/></radialGradient><radialGradient id="gd" cx="0.3" cy="0.3" r="0.8"><stop offset="0" stop-color="#888"/><stop offset="0.6" stop-color="#111"/></radialGradient></defs></svg>
<svg style="left:12px;top:121px;" width="20" height="17" viewBox="0 0 20 17"><defs><linearGradient id="gmv" x1="0" y1="0" x2="1" y2="0"><stop offset="0" stop-color="#8a8a8a"/><stop offset="0.45" stop-color="#222"/><stop offset="1" stop-color="#000"/></linearGradient></defs><polygon points="0.8,0.8 0.8,12.2 4.2,9.3 9.2,9.3" fill="url(#gmv)"/><path d="M13.6 7.5 V15.5 M9.6 11.5 H17.6" stroke="#222" stroke-width="1"/><polygon points="13.6,6 11.8,8.3 15.4,8.3" fill="#222"/><polygon points="13.6,17 11.8,14.7 15.4,14.7" fill="#222"/><polygon points="8.1,11.5 10.4,9.7 10.4,13.3" fill="#222"/><polygon points="19.1,11.5 16.8,9.7 16.8,13.3" fill="#222"/></svg>
<svg style="left:14px;top:146px;" width="16" height="15" viewBox="0 0 16 15"><g fill="#333"><rect x="0" y="0" width="2.5" height="1"/><rect x="4.5" y="0" width="3" height="1"/><rect x="9" y="0" width="3" height="1"/><rect x="13.5" y="0" width="2" height="1"/><rect x="0" y="13" width="2.5" height="1"/><rect x="4.5" y="13" width="3" height="1"/><rect x="9" y="13" width="3" height="1"/><rect x="13.5" y="13" width="2" height="1"/><rect x="0" y="0" width="1" height="2.5"/><rect x="0" y="4.5" width="1" height="3"/><rect x="0" y="9" width="1" height="3"/><rect x="0" y="13" width="1" height="1"/><rect x="14.5" y="0" width="1" height="2.5"/><rect x="14.5" y="4.5" width="1" height="3"/><rect x="14.5" y="9" width="1" height="3"/><rect x="14.5" y="12.5" width="1" height="1.5"/></g></svg>
<svg style="left:13px;top:166px;" width="18" height="18" viewBox="0 0 18 18"><path d="M1.5 2 L8.5 6 L15 1.5 L15 9 L6 13 Z" fill="none" stroke="#444" stroke-width="1.1"/><circle cx="5" cy="12" r="1.6" fill="none" stroke="#333" stroke-width="1"/><path d="M6 13.5 C6.5 15 5.5 16.5 4.5 17" stroke="#333" fill="none" stroke-width="1.2"/></svg>
<svg style="left:12px;top:190px;" width="18" height="16" viewBox="0 0 18 16"><g stroke="#6a6a6a" stroke-width="0.8"><path d="M6.5 0 V9.5 M1.5 4.8 H11.5 M2.8 1 L10.2 8.5 M10.2 1 L2.8 8.5"/></g><circle cx="6.5" cy="4.8" r="1.5" fill="#f4f4f4"/><path d="M8.5 7 L17 15" stroke="#222" stroke-width="1.5"/></svg>
<svg style="left:14px;top:213px;" width="17" height="17" viewBox="0 0 17 17"><path d="M4.5 0.5 V12.5 H16.5 M0.5 4.5 H12.5 V16.5" fill="none" stroke="#333" stroke-width="1.8"/><path d="M5.5 11.5 L15 2" stroke="#333" stroke-width="1"/></svg>
<svg style="left:14px;top:237px;" width="17" height="17" viewBox="0 0 17 17"><path d="M1 16 L2 13 L8.5 6.5 L10.5 8.5 L4 15 Z" fill="#f4f4f4" stroke="#444" stroke-width="0.9"/><path d="M7.5 4.5 L12.5 9.5" stroke="#333" stroke-width="2.4"/><path d="M10 6.5 L14 2.5" stroke="#333" stroke-width="3.4" stroke-linecap="round"/></svg>
<svg style="left:10px;top:263px;" width="22" height="18" viewBox="0 0 22 18"><circle cx="6.3" cy="10.5" r="5" fill="#f6f6f6" stroke="#333" stroke-width="0.9" stroke-dasharray="1 1"/><g transform="rotate(-42 11.5 9)"><rect x="1.2" y="6.2" width="20.6" height="5.6" rx="2.8" fill="#9a9a9a" stroke="#5a5a5a" stroke-width="0.7"/><rect x="8" y="6.5" width="7" height="5" fill="#8a8a8a"/><g fill="#f2f2f2"><rect x="3.5" y="7.4" width="1" height="1"/><rect x="5.8" y="9.4" width="1" height="1"/><rect x="9" y="7.4" width="1" height="1"/><rect x="11" y="9.4" width="1" height="1"/><rect x="13" y="7.4" width="1" height="1"/><rect x="16.5" y="9.4" width="1" height="1"/><rect x="18.5" y="7.4" width="1" height="1"/></g></g></svg>
<svg style="left:14px;top:288px;" width="16" height="16" viewBox="0 0 16 16"><path d="M1 15 L2.5 11 L11 2.5 A1.6 1.6 0 0 1 13.5 5 L5 13.5 Z" fill="#f4f4f4" stroke="#333" stroke-width="1"/><path d="M1 15 L2.5 11 L5 13.5 Z" fill="#333"/><path d="M9.5 4 L12 6.5" stroke="#333" stroke-width="1"/></svg>
<svg style="left:14px;top:310px;" width="16" height="17" viewBox="0 0 16 17"><defs><radialGradient id="gst" cx="0.35" cy="0.3" r="0.8"><stop offset="0" stop-color="#bbb"/><stop offset="1" stop-color="#3a3a3a"/></radialGradient></defs><circle cx="7.5" cy="3.6" r="3.1" fill="url(#gst)" stroke="#333" stroke-width="0.7"/><rect x="6.3" y="6" width="2.4" height="4" fill="#444"/><rect x="0.6" y="9.2" width="14.3" height="7" rx="1.6" fill="#f2f2f2" stroke="#333" stroke-width="1.1"/><rect x="1.2" y="11" width="13" height="1.6" fill="#555"/><polygon points="5,12.3 10,12.3 7.5,14.8" fill="#111"/></svg>
<svg style="left:13px;top:333px;" width="18" height="17" viewBox="0 0 18 17"><path d="M2.5 13.5 C4.5 10 9 6 14.5 2 C15.8 1.3 16.3 2.2 15.5 3.2 C12 7.5 9 10.5 5.5 14.5 Z" fill="#c8c8c8" stroke="#333" stroke-width="0.9"/><path d="M2.5 13.5 C1.2 14.3 0.8 15.3 1.5 16 C3 16.2 4.5 15.7 5.5 14.5 Z" fill="#222"/><path d="M13 8 A6 6 0 0 1 9.5 15.5" fill="none" stroke="#222" stroke-width="1" stroke-dasharray="1 1.1"/><path d="M3.2 4.2 C5.5 2.2 8 2.2 9.8 3.6" fill="none" stroke="#222" stroke-width="1.1"/><polygon points="1.6,5.8 2.6,2.2 5.6,4.8" fill="#222"/></svg>
<svg style="left:14px;top:358px;" width="17" height="13" viewBox="0 0 17 13"><path d="M0.8 8.5 L7 1 H16 L10 8.5 Z" fill="#f6f6f6" stroke="#333" stroke-width="1"/><path d="M0.8 8.5 V11.5 H10 V8.5 M10 11.5 L16 4 V1" fill="#ddd" stroke="#333" stroke-width="1"/></svg>
<div style="left:9px;top:376px;width:26px;height:23px;background:#fff;border:1px solid;border-color:#7a7a7a #fff #fff #7a7a7a;"></div>
<svg style="left:13px;top:379px;" width="18" height="18" viewBox="0 0 18 18"><defs><linearGradient id="gbk" x1="0.2" y1="0.1" x2="0.75" y2="0.9"><stop offset="0" stop-color="#fff"/><stop offset="0.6" stop-color="#f4f4f4"/><stop offset="1" stop-color="#9a9a9a"/></linearGradient></defs><path d="M0.6 11.2 L7.3 4 L15.6 9.6 L7.4 16.6 Z" fill="url(#gbk)" stroke="#1a1a1a" stroke-width="1.1" stroke-linejoin="round"/><path d="M13 6.8 L16.3 9.6 C16.8 11.5 16.8 13.5 16.4 15 L14.3 15.3 C14.8 13.5 14.6 12 13.8 10.8 Z" fill="#111"/><path d="M5.3 5.6 C5 3 5.8 1.5 7.2 1.5 C8.8 1.5 9.4 3.5 9.4 5.5 V8.3" fill="none" stroke="#222" stroke-width="0.9"/><circle cx="9.4" cy="8.7" r="0.9" fill="#eee" stroke="#444" stroke-width="0.6"/></svg>
<svg style="left:31.5px;top:396px;" width="3" height="3" viewBox="0 0 3 3"><polygon points="3,0 3,3 0,3" fill="#111"/></svg>
<svg style="left:15px;top:402px;" width="13" height="17" viewBox="0 0 13 17"><path d="M6.3 0.8 C8 5 11.5 8 11.5 11.5 A5.2 5.2 0 0 1 1 11.5 C1 8 4.6 5 6.3 0.8 Z" fill="url(#gb)" stroke="#777" stroke-width="0.9"/></svg>
<svg style="left:14px;top:426px;" width="15" height="15" viewBox="0 0 15 15"><circle cx="5.5" cy="5.5" r="4.7" fill="url(#gd)"/><path d="M8.5 9 L14 14" stroke="#222" stroke-width="1.3"/></svg>
<svg style="left:15px;top:450px;" width="14" height="19" viewBox="0 0 14 19"><path d="M7 0.5 L11.5 11 L9.5 14 H4.5 L2.5 11 Z" fill="#f2f2f2" stroke="#222" stroke-width="1"/><path d="M7 1 V9" stroke="#222" stroke-width="0.9"/><circle cx="7" cy="10" r="1" fill="#222"/><rect x="3.5" y="14.5" width="7" height="1.6" fill="#222"/><path d="M4.5 16 V18.5 M9.5 16 V18.5" stroke="#222" stroke-width="1.2"/></svg>
<svg style="left:16px;top:498px;" width="11" height="16" viewBox="0 0 11 16"><defs><linearGradient id="gps" x1="0" y1="0" x2="1" y2="0"><stop offset="0" stop-color="#8a8a8a"/><stop offset="0.5" stop-color="#1a1a1a"/><stop offset="1" stop-color="#000"/></linearGradient></defs><path d="M1 0.8 V12.3 L3.8 9.8 L6 15 L8.2 14 L6 9 H9.6 Z" fill="url(#gps)"/></svg>
<svg style="left:15px;top:523px;" width="15" height="13" viewBox="0 0 15 13"><rect x="0.5" y="0.5" width="13.5" height="11" fill="url(#gv)" stroke="#333" stroke-width="1"/></svg>
<svg style="left:11px;top:547px;" width="22" height="18" viewBox="0 0 22 18"><path d="M8.5 6 C3.5 6.5 0.8 8.5 1.5 10.8 C2.3 13.3 6.5 15 10 15.2 M13 15.6 C17.5 15.6 20.8 13.8 20.5 11.3 C20.2 9.3 18 7.6 15 6.8" fill="none" stroke="#111" stroke-width="1.5"/><polygon points="6.5,12 13.5,15.6 6.2,16.8" fill="#111"/><circle cx="11.8" cy="4.6" r="3.9" fill="url(#gb)" stroke="#aaa" stroke-width="0.5"/></svg>
<svg style="left:11px;top:570px;" width="22" height="19" viewBox="0 0 22 19"><rect x="14.5" y="1.6" width="6.3" height="4.2" rx="0.8" fill="#6a6a6a"/><polygon points="14.5,3.7 12,2 12,5.4" fill="#8a8a8a"/><path d="M10 7.3 C4 7.3 0.8 9.5 1.5 12 C2.3 14.5 6.5 16.2 10 16.4 M13 16.8 C17.5 16.8 20.8 15 20.5 12.5 C20.2 10.3 17 8 12.5 7.4" fill="none" stroke="#111" stroke-width="1.5"/><polygon points="6.5,13.2 13.5,16.8 6.2,18" fill="#111"/></svg>
<svg style="left:13px;top:594px;" width="17" height="17" viewBox="0 0 17 17"><path d="M4.5 16.5 C2.5 13.5 0.5 10.5 1 9 C1.5 8 3 8.5 4 10.5 L4 4 C4 2.5 6 2.5 6 4 L6.3 8 L6.7 2.2 C6.7 0.7 8.8 0.7 8.8 2.2 L9 8 L9.8 3 C10 1.6 11.9 1.8 11.8 3.3 L11.5 8.5 L12.8 5.5 C13.3 4.3 15 4.8 14.7 6.2 C14 9.5 14 13.5 12.5 16.5 Z" fill="#fafafa" stroke="#333" stroke-width="1"/></svg>
<svg style="left:13px;top:617px;" width="17" height="17" viewBox="0 0 17 17"><defs><radialGradient id="gzm" cx="0.4" cy="0.35" r="0.75"><stop offset="0" stop-color="#f4f4f4"/><stop offset="1" stop-color="#bdbdbd"/></radialGradient></defs><circle cx="6.5" cy="6.5" r="5.2" fill="url(#gzm)" stroke="#3a3a3a" stroke-width="1.2"/><path d="M10.5 10.5 L15.3 15.3" stroke="#161616" stroke-width="2.2" stroke-linecap="round"/></svg>
<div style="left:11.5px;top:644.5px;width:6.5px;height:6.5px;background:#fff;border:1px solid;border-color:#fff #333 #333 #fff;"></div>
<div style="left:8px;top:641px;width:7px;height:7px;background:linear-gradient(90deg,#555,#000 40%);"></div>
<svg style="left:25px;top:641px;" width="11" height="11" viewBox="0 0 11 11"><path d="M3 3 C7 3 8 5 8 8" fill="none" stroke="#222" stroke-width="1.5"/><polygon points="0.3,3 3.8,0.3 3.8,5.7" fill="#222"/><polygon points="5.2,7 10.8,7 8,10.6" fill="#222"/></svg>
<div style="left:17px;top:666.2px;width:20.2px;height:19.6px;background:#f57900;border:1px solid #f6f6f6;"></div>
<div style="left:6.8px;top:655.8px;width:20.5px;height:20.5px;background:#fff;box-shadow:0.5px 0.5px 0 0.5px #cfcfcf;"></div>
<div style="left:13.2px;top:693.2px;width:16.8px;height:12.6px;background:linear-gradient(135deg,#fff,#e6e6e6);border:1px solid;border-color:#777 #111 #111 #777;"></div>
<div style="left:17.1px;top:695.1px;width:8.8px;height:8.8px;background:#fafafa;border:1px solid #333;border-radius:50%;"></div>
<svg style="left:441px;top:123px;" width="17" height="17" viewBox="0 0 17 17"><rect x="1.5" y="0.6" width="4" height="4" fill="#fff" stroke="#555" stroke-width="0.9"/><rect x="1.5" y="6.4" width="4" height="4" fill="#fff" stroke="#222" stroke-width="1.1"/><rect x="1" y="12" width="5" height="4.8" fill="#555"/><path d="M13.2 3 C15.6 6.5 14.8 11 10 14.3" fill="none" stroke="#444" stroke-width="1.7"/><polygon points="8.6,1 15.2,1.2 10.8,6.6" fill="#444"/></svg>
<svg style="left:440px;top:155px;" width="18" height="13" viewBox="0 0 18 13"><rect x="0.5" y="0.5" width="16.5" height="12" fill="#e9e9e9" stroke="#333" stroke-width="1"/><polygon points="4,2.5 4,10.5 14,6.5" fill="#555" stroke="#222" stroke-width="0.8"/></svg>
<svg style="left:439px;top:198px;" width="20" height="15" viewBox="0 0 20 15"><path d="M1 10 C0 5 6 0.5 12.5 1 C17.5 1.3 19.5 4 18.5 6.5 C17.5 9 14 8.5 13.5 10.5 C13 13 10 14.5 6 14 C3 13.7 1.5 12 1 10 Z" fill="#3a3a3a"/><g fill="#eee"><circle cx="5" cy="8" r="1.5"/><circle cx="8.5" cy="4.5" r="1.5"/><circle cx="13.5" cy="4" r="1.5"/><circle cx="8" cy="11" r="1.6"/></g></svg>
<svg style="left:440px;top:229px;" width="17" height="13" viewBox="0 0 17 13"><rect x="0" y="0" width="17" height="13" fill="#555"/><g><rect x="1" y="1" width="3" height="3" fill="#333"/><rect x="5" y="1" width="3" height="3" fill="#444"/><rect x="9" y="1" width="3" height="3" fill="#777"/><rect x="13" y="1" width="3" height="3" fill="#fff"/><rect x="1" y="5" width="3" height="3" fill="#444"/><rect x="5" y="5" width="3" height="3" fill="#666"/><rect x="9" y="5" width="3" height="3" fill="#bbb"/><rect x="13" y="5" width="3" height="3" fill="#fff"/><rect x="1" y="9" width="3" height="3" fill="#777"/><rect x="5" y="9" width="3" height="3" fill="#aaa"/><rect x="9" y="9" width="3" height="3" fill="#ddd"/><rect x="13" y="9" width="3" height="3" fill="#fff"/></g></svg>
<svg style="left:439px;top:258px;" width="18" height="16" viewBox="0 0 18 16"><defs><linearGradient id="gfx" x1="0" y1="0" x2="1" y2="1"><stop offset="0" stop-color="#fff"/><stop offset="1" stop-color="#b4b4b4"/></linearGradient></defs><rect x="4.7" y="0.5" width="12" height="10.8" fill="url(#gfx)" stroke="#666" stroke-width="0.8"/></svg>
<svg style="left:20px;top:67px;" width="18" height="18" viewBox="0 0 18 18"><defs><linearGradient id="gbk" x1="0.2" y1="0.1" x2="0.75" y2="0.9"><stop offset="0" stop-color="#fff"/><stop offset="0.6" stop-color="#f4f4f4"/><stop offset="1" stop-color="#9a9a9a"/></linearGradient></defs><path d="M0.6 11.2 L7.3 4 L15.6 9.6 L7.4 16.6 Z" fill="url(#gbk)" stroke="#1a1a1a" stroke-width="1.1" stroke-linejoin="round"/><path d="M13 6.8 L16.3 9.6 C16.8 11.5 16.8 13.5 16.4 15 L14.3 15.3 C14.8 13.5 14.6 12 13.8 10.8 Z" fill="#111"/><path d="M5.3 5.6 C5 3 5.8 1.5 7.2 1.5 C8.8 1.5 9.4 3.5 9.4 5.5 V8.3" fill="none" stroke="#222" stroke-width="0.9"/><circle cx="9.4" cy="8.7" r="0.9" fill="#eee" stroke="#444" stroke-width="0.6"/></svg>
<svg style="left:505px;top:524px;" width="9" height="9" viewBox="0 0 9 9"><path d="M0.5 4.5 L3.5 7.5 M3.5 7.5 L8 1" stroke="#555" stroke-width="1" stroke-dasharray="1 1" fill="none"/><circle cx="8" cy="1.5" r="1.3" fill="#fff" stroke="#444" stroke-width="0.8"/></svg>
<svg style="left:511.5px;top:528px;" width="7" height="8" viewBox="0 0 7 8"><path d="M1.8 3.5 V2.6 A1.7 1.7 0 0 1 5.2 2.6 V3.5" fill="none" stroke="#222" stroke-width="1.1"/><rect x="0.5" y="3.5" width="6" height="4" fill="#f2f2f2" stroke="#222" stroke-width="1"/></svg>
<svg style="left:523px;top:523.5px;" width="12" height="9" viewBox="0 0 12 9"><path d="M0.5 5 C3 0.5 9 0.5 11.5 5 C9 8.5 3 8.5 0.5 5 Z" fill="#ddd" stroke="#222" stroke-width="1"/><circle cx="6" cy="4.8" r="2.2" fill="#222"/><path d="M1 2.5 C3.5 0 8.5 0 11 2.5" stroke="#222" stroke-width="1.1" fill="none"/></svg>
<svg style="left:529.5px;top:528px;" width="7" height="8" viewBox="0 0 7 8"><path d="M1.8 3.5 V2.6 A1.7 1.7 0 0 1 5.2 2.6 V3.5" fill="none" stroke="#222" stroke-width="1.1"/><rect x="0.5" y="3.5" width="6" height="4" fill="#f2f2f2" stroke="#222" stroke-width="1"/></svg>
<svg style="left:541px;top:523.5px;" width="10" height="10" viewBox="0 0 10 10"><circle cx="5" cy="5" r="4.5" fill="#555"/><path d="M3 7.5 L7 2.5 M2.5 4 H6 M4 6.5 H7.5" stroke="#e8e8e8" stroke-width="1"/></svg>
<svg style="left:547.5px;top:528px;" width="7" height="8" viewBox="0 0 7 8"><path d="M1.8 3.5 V2.6 A1.7 1.7 0 0 1 5.2 2.6 V3.5" fill="none" stroke="#222" stroke-width="1.1"/><rect x="0.5" y="3.5" width="6" height="4" fill="#f2f2f2" stroke="#222" stroke-width="1"/></svg>
<div style="left:507px;top:549px;width:11px;height:11px;background:#fff;border:1px solid #555;box-shadow:1px 1px 0 #999;"></div>
<div style="left:508px;top:550px;width:3px;height:3px;background:#ccc;"></div>
<div style="left:514px;top:550px;width:3px;height:3px;background:#ccc;"></div>
<div style="left:511px;top:553px;width:3px;height:3px;background:#ccc;"></div>
<div style="left:508px;top:556px;width:3px;height:3px;background:#ccc;"></div>
<div style="left:514px;top:556px;width:3px;height:3px;background:#ccc;"></div>
<svg style="left:525px;top:548px;" width="13" height="12" viewBox="0 0 13 12"><path d="M0.5 11.2 C2.5 10.8 4 9.5 5.5 7.5 L8 9.8 C6 11.5 3 12 0.5 11.2 Z" fill="#222"/><path d="M5.5 7.5 L11.8 0.8 C12.6 0.3 13 0.9 12.6 1.6 L8 9.8 Z" fill="#b0b0b0" stroke="#444" stroke-width="0.8"/></svg>
<svg style="left:542.5px;top:548.5px;" width="12" height="12" viewBox="0 0 12 12"><path d="M6 1.5 V10.5 M1.5 6 H10.5" stroke="#222" stroke-width="1.2"/><polygon points="6,0 4,2.5 8,2.5" fill="#222"/><polygon points="6,12 4,9.5 8,9.5" fill="#222"/><polygon points="0,6 2.5,4 2.5,8" fill="#222"/><polygon points="12,6 9.5,4 9.5,8" fill="#222"/></svg>
<svg style="left:561.5px;top:549px;" width="10" height="11" viewBox="0 0 10 11"><path d="M2.3 5 V3.6 A2.7 2.7 0 0 1 7.7 3.6 V5" fill="none" stroke="#222" stroke-width="1.4"/><rect x="0.5" y="5" width="9" height="5.5" fill="#444" stroke="#222" stroke-width="1"/><rect x="2" y="7" width="6" height="1" fill="#aaa"/></svg>
<svg style="left:501px;top:704px;" width="19" height="9" viewBox="0 0 19 9"><rect x="0.7" y="1.2" width="9.5" height="6" rx="3" fill="none" stroke="#777" stroke-width="1.4"/><rect x="8.3" y="1.2" width="9.5" height="6" rx="3" fill="none" stroke="#999" stroke-width="1.4"/></svg>
<svg style="left:544px;top:711px;" width="4" height="3" viewBox="0 0 4 3"><polygon points="0,0 4,0 2,2.5" fill="#222"/></svg>
<svg style="left:558px;top:703px;" width="14" height="12" viewBox="0 0 14 12"><rect x="0.5" y="0.5" width="13" height="11" fill="#bbb" stroke="#333" stroke-width="1"/><circle cx="7" cy="6" r="3.3" fill="#fff" stroke="#333" stroke-width="0.6"/></svg>
<svg style="left:586px;top:703px;" width="16" height="12" viewBox="0 0 16 12"><circle cx="6" cy="6" r="5.3" fill="#fff" stroke="#333" stroke-width="1"/><path d="M2.2 9.8 A5.3 5.3 0 0 0 9.8 2.2 Z" fill="#333"/><polygon points="12,9 16,9 14,11.5" fill="#222"/></svg>
<svg style="left:612.5px;top:703px;" width="12" height="11" viewBox="0 0 12 11"><path d="M0.5 10 V1 H4.5 L5.5 2.2 H11 V10 Z" fill="#f2f2f2" stroke="#666" stroke-width="0.9"/><path d="M1 10.3 H11.2 V3" stroke="#333" stroke-width="0.8" fill="none"/></svg>
<svg style="left:640.5px;top:704px;" width="11" height="11" viewBox="0 0 11 11"><rect x="0.5" y="0.5" width="8.5" height="8.5" fill="#fff" stroke="#777" stroke-width="0.9"/><rect x="4.5" y="4.5" width="5.5" height="5.5" fill="#eee" stroke="#222" stroke-width="1"/><path d="M1 9.7 H10 V1" stroke="#222" stroke-width="1" fill="none"/></svg>
<svg style="left:668px;top:702px;" width="11" height="13" viewBox="0 0 11 13"><path d="M1.5 4 H9.5 L8.7 12.5 H2.3 Z" fill="#f0f0f0" stroke="#333" stroke-width="1"/><path d="M0.5 3.5 H10.5 M3.5 1.5 H7.5" stroke="#333" stroke-width="1.2" fill="none"/><path d="M4 5.5 V11 M7 5.5 V11" stroke="#555" stroke-width="1"/></svg>
<span class="t" style="left:13.9px;top:7px;font-size:13.5px;color:#0c1420;font-weight:700;-webkit-text-stroke:0;transform:scaleX(0.8);transform-origin:0 0;">Ps</span>
<span class="t" style="left:50.7px;top:9px;font-size:11px;color:#111;letter-spacing:0.15px;-webkit-text-stroke:0.35px #111;">Br</span>
<span class="t" style="left:137.5px;top:8px;font-size:12px;color:#3a3a3a;-webkit-text-stroke:0.1px currentColor;letter-spacing:-0.60px;">3200</span>
<span class="t" style="left:574.5px;top:9px;font-size:12px;color:#2a2a2a;font-weight:700;-webkit-text-stroke:0;letter-spacing:-0.07px;">VIDEO</span>
<span class="t" style="left:12.3px;top:38px;font-size:12px;color:#1c1c1c;-webkit-text-stroke:0.1px currentColor;letter-spacing:-0.26px;">File</span>
<span class="t" style="left:46.0px;top:38px;font-size:12px;color:#1c1c1c;-webkit-text-stroke:0.1px currentColor;letter-spacing:0.05px;">Edit</span>
<span class="t" style="left:82.5px;top:38px;font-size:12px;color:#1c1c1c;-webkit-text-stroke:0.1px currentColor;letter-spacing:-0.09px;">Image</span>
<span class="t" style="left:133.0px;top:38px;font-size:12px;color:#1c1c1c;-webkit-text-stroke:0.1px currentColor;letter-spacing:-0.35px;">Layer</span>
<span class="t" style="left:177.5px;top:38px;font-size:12px;color:#1c1c1c;-webkit-text-stroke:0.1px currentColor;letter-spacing:-0.29px;">Select</span>
<span class="t" style="left:226.0px;top:38px;font-size:12px;color:#1c1c1c;-webkit-text-stroke:0.1px currentColor;">Filter</span>
<span class="t" style="left:268.9px;top:38px;font-size:12px;color:#1c1c1c;-webkit-text-stroke:0.1px currentColor;letter-spacing:-0.17px;">Analysis</span>
<span class="t" style="left:328.8px;top:38px;font-size:12px;color:#1c1c1c;-webkit-text-stroke:0.1px currentColor;letter-spacing:-0.12px;">3D</span>
<span class="t" style="left:359.5px;top:38px;font-size:12px;color:#1c1c1c;-webkit-text-stroke:0.1px currentColor;letter-spacing:-0.07px;">View</span>
<span class="t" style="left:401.9px;top:38px;font-size:12px;color:#1c1c1c;-webkit-text-stroke:0.1px currentColor;letter-spacing:0.24px;">Window</span>
<span class="t" style="left:463.2px;top:38px;font-size:12px;color:#1c1c1c;-webkit-text-stroke:0.1px currentColor;letter-spacing:0.08px;">Help</span>
<span class="t" style="left:72.3px;top:72px;font-size:10.5px;color:#000;letter-spacing:0.03px;">Foreground</span>
<span class="t" style="left:210.1px;top:71px;font-size:10.5px;color:#1c1c1c;letter-spacing:-0.12px;">Mode:</span>
<span class="t" style="left:246.0px;top:72px;font-size:10.5px;color:#000;letter-spacing:-0.22px;">Normal</span>
<span class="t" style="left:346.0px;top:71px;font-size:10.5px;color:#1c1c1c;letter-spacing:0.04px;">Opacity:</span>
<span class="t" style="left:392.5px;top:71px;font-size:10.5px;color:#000;letter-spacing:-0.21px;">100%</span>
<span class="t" style="left:444.3px;top:71px;font-size:10.5px;color:#1c1c1c;letter-spacing:-0.08px;">Tolerance:</span>
<span class="t" style="left:499.0px;top:71px;font-size:10.5px;color:#000;letter-spacing:-0.09px;">32</span>
<span class="t" style="left:541.3px;top:70px;font-size:10.5px;color:#1c1c1c;letter-spacing:-0.33px;">Anti-alias</span>
<span class="t" style="left:600.3px;top:70px;font-size:10.5px;color:#1c1c1c;letter-spacing:-0.10px;">Contiguous</span>
<span class="t" style="left:671.3px;top:70px;font-size:10.5px;color:#1c1c1c;letter-spacing:-0.39px;width:31px;overflow:hidden;">All Layers</span>
<span class="t" style="left:49.5px;top:99px;font-size:11px;color:#3c3c3c;font-weight:700;-webkit-text-stroke:0;letter-spacing:0.04px;">Untitled-1 @ 3200% (Background copy, RGB/8) *</span>
<span class="t" style="left:92.9px;top:114px;font-size:9.6px;color:#000;-webkit-text-stroke:0.1px currentColor;">0</span>
<span class="t" style="left:42.1px;top:214px;font-size:9.6px;color:#000;-webkit-text-stroke:0.1px currentColor;">0</span>
<span class="t" style="left:46.5px;top:589px;font-size:10.5px;color:#000;letter-spacing:-0.36px;">3200%</span>
<span class="t" style="left:138.5px;top:588px;font-size:10.5px;color:#000;letter-spacing:-0.17px;">Doc: 243 bytes/783 bytes</span>
<span class="t" style="left:47.5px;top:605px;font-size:10.5px;color:#3c3c3c;font-weight:700;-webkit-text-stroke:0;letter-spacing:-0.11px;">ANIMATION (FRAMES)</span>
<span class="t" style="left:50.5px;top:628px;font-size:10px;color:#000;font-weight:700;-webkit-text-stroke:0;">1</span>
<span class="t" style="left:71.6px;top:686px;font-size:10.5px;color:#fff;letter-spacing:-0.39px;">0 sec.</span>
<span class="t" style="left:47.5px;top:703px;font-size:11px;color:#222;letter-spacing:0.01px;">Forever</span>
<span class="t" style="left:473.2px;top:110px;font-size:10px;color:#3a3a3a;font-weight:700;-webkit-text-stroke:0;letter-spacing:0.23px;">INFO</span>
<span class="t" style="left:488.4px;top:132px;font-size:9.2px;color:#0c0c0c;-webkit-text-stroke:0.1px currentColor;">R :</span>
<span class="t" style="left:487.8px;top:143px;font-size:9.2px;color:#0c0c0c;-webkit-text-stroke:0.1px currentColor;">G :</span>
<span class="t" style="left:488.9px;top:154px;font-size:9.2px;color:#0c0c0c;-webkit-text-stroke:0.1px currentColor;">B :</span>
<span class="t" style="left:604.0px;top:132px;font-size:9.2px;color:#0c0c0c;-webkit-text-stroke:0.1px currentColor;">C :</span>
<span class="t" style="left:602.9px;top:143px;font-size:9.2px;color:#0c0c0c;-webkit-text-stroke:0.1px currentColor;">M :</span>
<span class="t" style="left:604.6px;top:154px;font-size:9.2px;color:#0c0c0c;-webkit-text-stroke:0.1px currentColor;">Y :</span>
<span class="t" style="left:604.5px;top:164px;font-size:9.2px;color:#0c0c0c;-webkit-text-stroke:0.1px currentColor;">K :</span>
<span class="t" style="left:480.3px;top:176px;font-size:9.2px;color:#0c0c0c;-webkit-text-stroke:0.1px currentColor;letter-spacing:0.64px;">8-bit</span>
<span class="t" style="left:595.7px;top:176px;font-size:9.2px;color:#0c0c0c;-webkit-text-stroke:0.1px currentColor;letter-spacing:0.62px;">8-bit</span>
<span class="t" style="left:488.9px;top:198px;font-size:9.2px;color:#0c0c0c;-webkit-text-stroke:0.1px currentColor;">X :</span>
<span class="t" style="left:489.0px;top:209px;font-size:9.2px;color:#0c0c0c;-webkit-text-stroke:0.1px currentColor;">Y :</span>
<span class="t" style="left:601.9px;top:198px;font-size:9.2px;color:#0c0c0c;-webkit-text-stroke:0.1px currentColor;">W :</span>
<span class="t" style="left:604.0px;top:209px;font-size:9.2px;color:#0c0c0c;-webkit-text-stroke:0.1px currentColor;">H :</span>
<span class="t" style="left:473.6px;top:235px;font-size:10px;color:#3a3a3a;font-weight:700;-webkit-text-stroke:0;letter-spacing:-0.43px;">CLONE SOURCE</span>
<span class="t" style="left:478.5px;top:310px;font-size:10.5px;color:#0c0c0c;letter-spacing:-0.05px;">Offset:</span>
<span class="t" style="left:573.4px;top:310px;font-size:10.5px;color:#0c0c0c;letter-spacing:0.83px;">W:</span>
<span class="t" style="left:484.1px;top:331px;font-size:10.5px;color:#0c0c0c;letter-spacing:0.29px;">X:</span>
<span class="t" style="left:576.8px;top:331px;font-size:10.5px;color:#0c0c0c;letter-spacing:0.20px;">H:</span>
<span class="t" style="left:484.5px;top:352px;font-size:10.5px;color:#0c0c0c;letter-spacing:0.38px;">Y:</span>
<span class="t" style="left:502.4px;top:332px;font-size:10.5px;color:#000;letter-spacing:0.06px;">0 px</span>
<span class="t" style="left:502.4px;top:353px;font-size:10.5px;color:#000;letter-spacing:0.06px;">0 px</span>
<span class="t" style="left:595.9px;top:311px;font-size:10.5px;color:#000;letter-spacing:-0.42px;">100,0%</span>
<span class="t" style="left:595.9px;top:332px;font-size:10.5px;color:#000;letter-spacing:-0.42px;">100,0%</span>
<span class="t" style="left:595.9px;top:353px;font-size:10.5px;color:#000;letter-spacing:-0.30px;">0,0</span>
<span class="t" style="left:628.1px;top:350px;font-size:13px;color:#000;font-weight:700;-webkit-text-stroke:0;">°</span>
<span class="t" style="left:473.2px;top:381px;font-size:10.5px;color:#0c0c0c;letter-spacing:-0.26px;">Frame Offset:</span>
<span class="t" style="left:541.7px;top:382px;font-size:10.5px;color:#000;">0</span>
<span class="t" style="left:615.7px;top:381px;font-size:10.5px;color:#0c0c0c;letter-spacing:-0.17px;">Lock Frame</span>
<span class="t" style="left:485.7px;top:408px;font-size:10.5px;color:#0c0c0c;letter-spacing:0.01px;">Show Overlay</span>
<span class="t" style="left:606.6px;top:408px;font-size:10.5px;color:#0c0c0c;letter-spacing:-0.12px;">Clipped</span>
<span class="t" style="left:494.6px;top:428px;font-size:10.5px;color:#0c0c0c;letter-spacing:0.09px;">Opacity:</span>
<span class="t" style="left:541.7px;top:429px;font-size:10.5px;color:#000;letter-spacing:-0.26px;">100%</span>
<span class="t" style="left:606.6px;top:428px;font-size:10.5px;color:#0c0c0c;letter-spacing:-0.03px;">Auto Hide</span>
<span class="t" style="left:496.0px;top:451px;font-size:10.5px;color:#000;letter-spacing:-0.17px;">Normal</span>
<span class="t" style="left:606.6px;top:449px;font-size:10.5px;color:#0c0c0c;letter-spacing:0.46px;">Invert</span>
<span class="t" style="left:473.6px;top:478px;font-size:10px;color:#3a3a3a;font-weight:700;-webkit-text-stroke:0;letter-spacing:-0.56px;">LAYERS</span>
<span class="t" style="left:522.2px;top:478px;font-size:10px;color:#444;font-weight:700;-webkit-text-stroke:0;letter-spacing:-0.25px;">CHANNELS</span>
<span class="t" style="left:589.7px;top:478px;font-size:10px;color:#444;font-weight:700;-webkit-text-stroke:0;letter-spacing:0.20px;">PATHS</span>
<span class="t" style="left:475.2px;top:498px;font-size:10.5px;color:#000;letter-spacing:-0.26px;">Normal</span>
<span class="t" style="left:604.8px;top:497px;font-size:10.5px;color:#0c0c0c;letter-spacing:0.07px;">Opacity:</span>
<span class="t" style="left:651.9px;top:498px;font-size:10.5px;color:#000;letter-spacing:-0.51px;">100%</span>
<span class="t" style="left:471.8px;top:523px;font-size:10.5px;color:#0c0c0c;letter-spacing:0.23px;">Unify:</span>
<span class="t" style="left:610.8px;top:523px;font-size:10.5px;color:#0c0c0c;letter-spacing:-0.27px;">Propagate Frame 1</span>
<span class="t" style="left:475.2px;top:549px;font-size:10.5px;color:#0c0c0c;letter-spacing:0.06px;">Lock:</span>
<span class="t" style="left:628.0px;top:549px;font-size:10.5px;color:#0c0c0c;letter-spacing:-0.09px;">Fill:</span>
<span class="t" style="left:651.9px;top:550px;font-size:10.5px;color:#000;letter-spacing:-0.51px;">100%</span>
<span class="t" style="left:534.7px;top:583px;font-size:11px;color:#fff;font-weight:700;-webkit-text-stroke:0;letter-spacing:-0.39px;">Background copy</span>
<span class="t" style="left:534.9px;top:622px;font-size:11px;color:#000;font-style:italic;letter-spacing:-0.13px;-webkit-text-stroke:0.25px #000;">Background</span>
<span class="t" style="left:15.7px;top:472px;font-size:20px;color:#111;font-family:'Liberation Serif',serif;-webkit-text-stroke:0.45px #111;">T</span>
<span class="t" style="left:438.8px;top:261px;font-size:14px;color:#111;font-weight:700;-webkit-text-stroke:0;font-style:italic;font-family:'Liberation Serif',serif;">fx</span>
<span class="t" style="left:531.0px;top:702px;font-size:14px;color:#333;font-weight:700;-webkit-text-stroke:0;font-style:italic;font-family:'Liberation Serif',serif;">fx</span>
</div></body></html>
